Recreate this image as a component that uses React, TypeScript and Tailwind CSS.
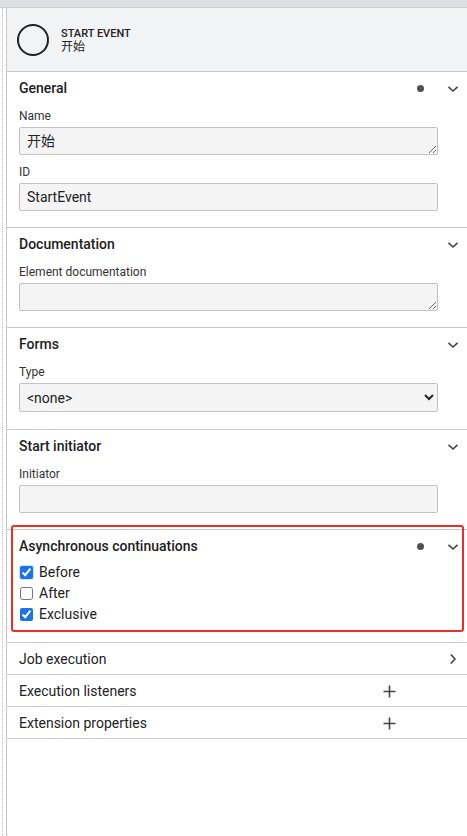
import React from "react";

const font = { fontFamily: 'Roboto, "Noto Sans CJK SC", sans-serif' };

function Chevron() {
  return (
    <svg width="12" height="8" viewBox="0 0 12 8" className="text-[#444]">
      <path d="M1.5 1.8 L6 6 L10.5 1.8" fill="none" stroke="currentColor" strokeWidth="1.6" />
    </svg>
  );
}

function ChevronRight() {
  return (
    <svg width="8" height="12" viewBox="0 0 8 12" className="text-[#444]">
      <path d="M1.8 1.5 L6 6 L1.8 10.5" fill="none" stroke="currentColor" strokeWidth="1.6" />
    </svg>
  );
}

function Plus() {
  return (
    <svg width="13" height="13" viewBox="0 0 13 13" className="text-[#444]">
      <path d="M6.5 0.5 V12.5 M0.5 6.5 H12.5" fill="none" stroke="currentColor" strokeWidth="1.6" />
    </svg>
  );
}

function Dot() {
  return <span className="block w-[7px] h-[7px] rounded-full bg-[#505050]" />;
}

function GroupHeader({ title, dot }: { title: string; dot?: boolean }) {
  return (
    <div className="h-[32px] flex items-center pl-[12px] pr-[8px] pt-[1px]">
      <span className="text-[14px] font-medium text-[#1d1d1d] flex-1">{title}</span>
      {dot && (
        <span className="mr-[23px]">
          <Dot />
        </span>
      )}
      <Chevron />
    </div>
  );
}

function Label({ children }: { children: React.ReactNode }) {
  return <div className="h-[23px] flex items-center text-[12px] text-[#333] pt-[1px]">{children}</div>;
}

const inputCls =
  "block w-[419px] h-[28px] bg-[#f4f4f4] border border-[#c3c3c3] rounded-[2px] px-[7px] text-[14px] text-[#222] outline-none";

function Group({ children }: { children: React.ReactNode }) {
  return <div className="border-b border-[#c8c8c8]">{children}</div>;
}

function Row({ title, icon }: { title: string; icon: React.ReactNode }) {
  return (
    <div className="h-[32px] border-b border-[#c8c8c8] flex items-center pl-[12px] pr-[8px] pt-[1px]">
      <span className="text-[14px] text-[#222] flex-1">{title}</span>
      {icon}
    </div>
  );
}

export default function App() {
  return (
    <div className="w-[467px] h-[836px] bg-white flex flex-col overflow-hidden relative" style={font}>
      <div className="h-[8px] bg-[#dfe0e3] border-b border-[#cdcdcd] shrink-0" />
      <div className="flex flex-1">
        <div className="w-[6px] shrink-0 flex">
          <div className="ml-[2px] border-l border-dotted border-[#b9b9b9]" />
        </div>
        <div className="flex-1 border-l border-[#c8c8c8] flex flex-col">
          <div className="h-[64px] bg-[#f2f3f4] border-b border-[#c8c8c8] flex items-center pl-[10px] shrink-0">
            <div className="w-[32px] h-[32px] rounded-full border-2 border-[#222] mt-[1px]" />
            <div className="ml-[12px] flex flex-col mt-[1px]">
              <span className="text-[11px] leading-[13px] font-medium text-[#222]">START EVENT</span>
              <span className="text-[12px] leading-[14px] text-[#222]">开始</span>
            </div>
          </div>

          <Group>
            <GroupHeader title="General" dot />
            <div className="pl-[12px] pb-[16px]">
              <Label>Name</Label>
              <textarea className={inputCls + " resize-y py-[3px] leading-[20px]"} defaultValue="开始" rows={1} />
              <div className="mt-[5px]">
                <Label>ID</Label>
              </div>
              <input className={inputCls} defaultValue="StartEvent" />
            </div>
          </Group>

          <Group>
            <GroupHeader title="Documentation" />
            <div className="pl-[12px] pb-[16px]">
              <Label>Element documentation</Label>
              <textarea className={inputCls + " resize-y"} rows={1} />
            </div>
          </Group>

          <Group>
            <GroupHeader title="Forms" />
            <div className="pl-[12px] pb-[17px]">
              <Label>Type</Label>
              <select className="block w-[419px] h-[29px] bg-[#f4f4f4] border border-[#c3c3c3] rounded-[2px] px-[3px] text-[14px] text-[#222] outline-none" defaultValue="none">
                <option value="none">&lt;none&gt;</option>
              </select>
            </div>
          </Group>

          <Group>
            <GroupHeader title="Start initiator" />
            <div className="pl-[12px] pb-[16px]">
              <Label>Initiator</Label>
              <input className={inputCls} defaultValue="" />
            </div>
          </Group>

          <Group>
            <GroupHeader title="Asynchronous continuations" dot />
            <div className="pl-[12px] pb-[17px]">
              {[
                { l: "Before", c: true, f: true },
                { l: "After", c: false, f: false },
                { l: "Exclusive", c: true, f: false },
              ].map((o) => (
                <label key={o.l} className="h-[21px] flex items-center text-[14px] text-[#222]">
                  <span className={"flex items-center justify-center w-[15px] h-[15px] rounded-[2px] " + (o.f ? "bg-[#cfe3fb]" : "")}>
                    <input
                      type="checkbox"
                      defaultChecked={o.c}
                      className="w-[13px] h-[13px] m-0 accent-[#1a73e8]"
                    />
                  </span>
                  <span className="ml-[5px]">{o.l}</span>
                </label>
              ))}
            </div>
          </Group>

          <Row title="Job execution" icon={<span className="mr-[2px]"><ChevronRight /></span>} />
          <Row title="Execution listeners" icon={<span className="mr-[63px]"><Plus /></span>} />
          <Row title="Extension properties" icon={<span className="mr-[63px]"><Plus /></span>} />
        </div>
      </div>
      <div className="absolute left-[11px] top-[525px] w-[453px] h-[107px] border-2 border-[#e8302a] rounded-[3px] pointer-events-none" />
    </div>
  );
}
